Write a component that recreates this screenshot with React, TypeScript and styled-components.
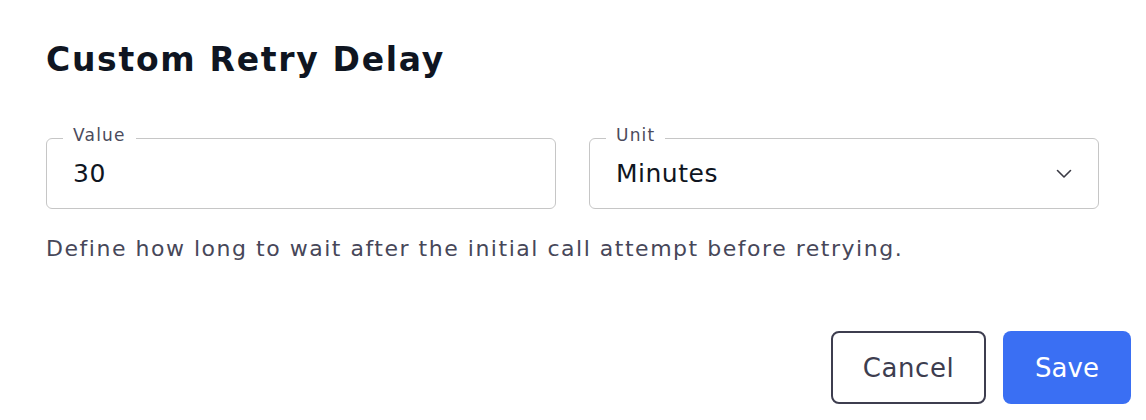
import React from 'react';
import styled, { createGlobalStyle } from 'styled-components';

const GlobalStyle = createGlobalStyle`
  html, body {
    margin: 0;
    padding: 0;
    background: #ffffff;
  }
  body {
    font-family: 'DejaVu Sans', 'Noto Sans', sans-serif;
  }
`;

const Dialog = styled.section`
  width: 1146px;
  height: 420px;
  box-sizing: border-box;
  padding: 40px 15px 0 46px;
  display: flex;
  flex-direction: column;
`;

const Title = styled.h2`
  margin: 0;
  font-size: 33px;
  line-height: 40px;
  font-weight: 700;
  letter-spacing: 1.7px;
  color: #0f1521;
`;

const Fields = styled.div`
  display: grid;
  grid-template-columns: 510px 510px;
  column-gap: 33px;
  margin-top: 58px;
`;

const FieldBox = styled.div`
  position: relative;
  height: 71px;
  box-sizing: border-box;
  border: 1.5px solid #c6c6c6;
  border-radius: 6px;
  display: flex;
  align-items: center;
  justify-content: space-between;
  padding: 0 26px 0 26px;
`;

const FloatLabel = styled.span`
  position: absolute;
  top: -14px;
  left: 16px;
  padding: 0 10px;
  background: #ffffff;
  font-size: 17px;
  line-height: 20px;
  letter-spacing: 1.2px;
  color: #4b4b5c;
`;

const FieldValue = styled.span`
  font-size: 25px;
  letter-spacing: 0.5px;
  color: #0f1521;
`;

const Hint = styled.p`
  margin: 26px 0 0;
  font-size: 22px;
  line-height: 28px;
  letter-spacing: 1.52px;
  color: #474759;
`;

const Actions = styled.div`
  display: flex;
  justify-content: flex-end;
  gap: 17px;
  margin-top: 68px;
`;

const Button = styled.button<{ $primary?: boolean }>`
  height: 73px;
  box-sizing: border-box;
  border-radius: 8px;
  font-family: 'DejaVu Sans', 'Noto Sans', sans-serif;
  font-size: 26px;
  font-weight: 400;
  letter-spacing: ${p => (p.$primary ? '0' : '0.6px')};
  cursor: pointer;
  padding: 0;
  width: ${p => (p.$primary ? '128px' : '155px')};
  border: ${p => (p.$primary ? 'none' : '2px solid #3d3d4f')};
  background: ${p => (p.$primary ? '#3a6ff3' : '#ffffff')};
  color: ${p => (p.$primary ? '#ffffff' : '#3d3d4f')};
`;

const Chevron = () => (
  <svg width="16" height="10" viewBox="0 0 16 10" fill="none">
    <path d="M1.5 1.5 L8 8 L14.5 1.5" stroke="#3a3a44" strokeWidth="1.6" strokeLinecap="round" strokeLinejoin="round" />
  </svg>
);

export default function App() {
  return (
    <>
      <GlobalStyle />
      <Dialog>
        <Title>Custom Retry Delay</Title>
        <Fields>
          <FieldBox>
            <FloatLabel>Value</FloatLabel>
            <FieldValue>30</FieldValue>
          </FieldBox>
          <FieldBox>
            <FloatLabel>Unit</FloatLabel>
            <FieldValue>Minutes</FieldValue>
            <Chevron />
          </FieldBox>
        </Fields>
        <Hint>Define how long to wait after the initial call attempt before retrying.</Hint>
        <Actions>
          <Button>Cancel</Button>
          <Button $primary>Save</Button>
        </Actions>
      </Dialog>
    </>
  );
}
